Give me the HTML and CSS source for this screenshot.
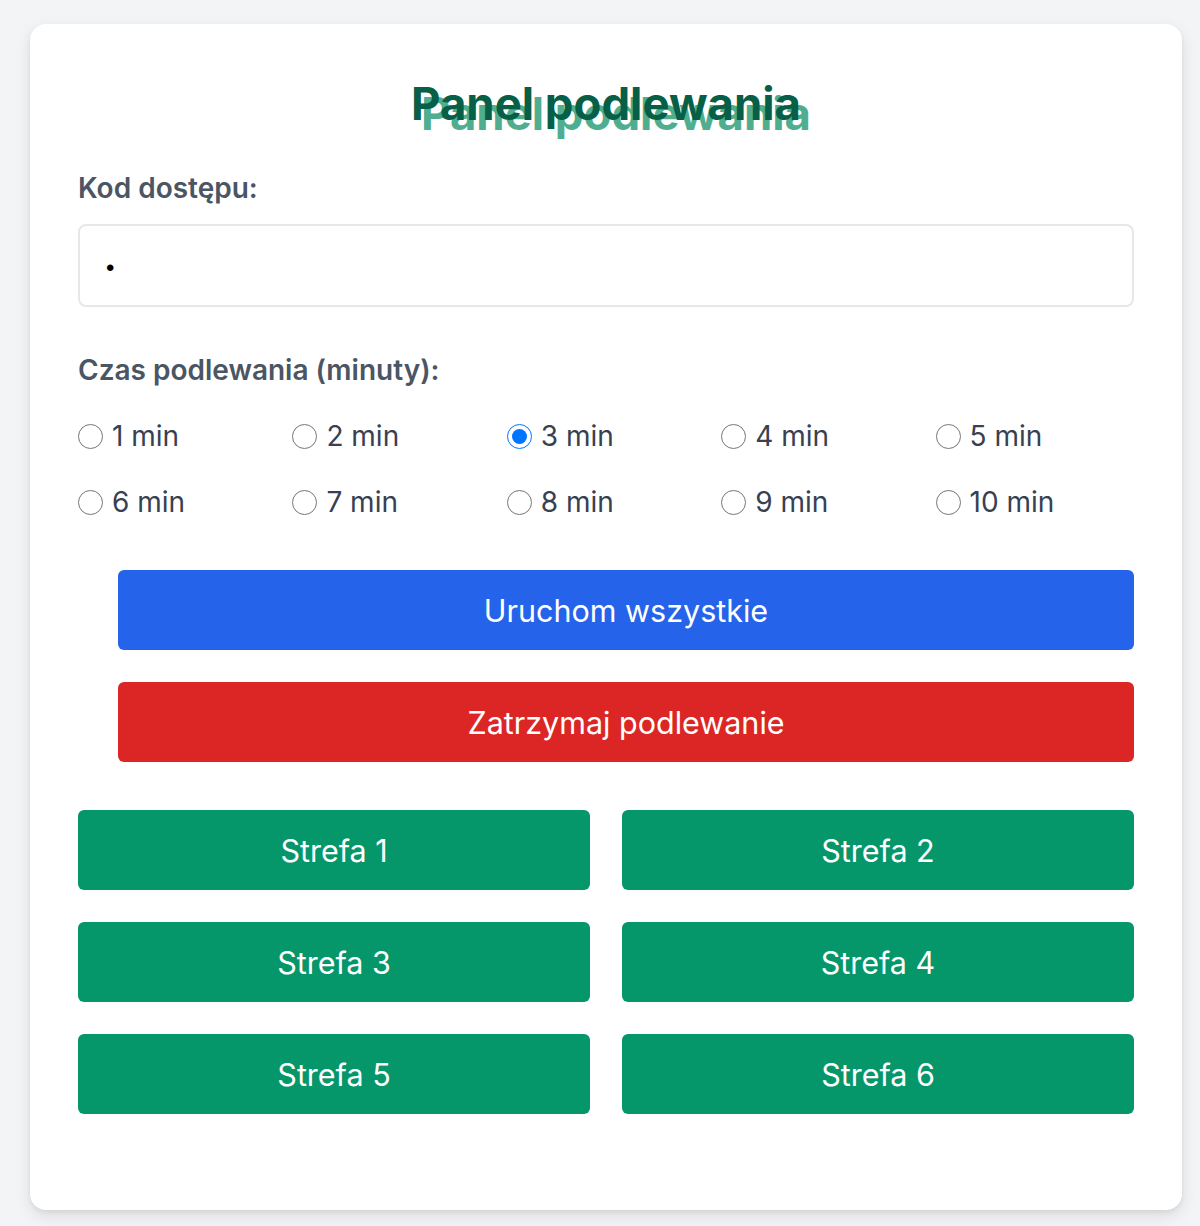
FILE: index.html
```html
<!DOCTYPE html>
<html lang="pl">
<head>
<meta charset="utf-8">
<title>Panel podlewania</title>
<link rel="stylesheet" href="styles.css">
</head>
<body>
<main class="card">
  <h1 class="title">Panel podlewania</h1>
  <label class="label" for="code">Kod dostępu:</label>
  <input class="code" id="code" type="password" value="1">
  <div class="label label-time">Czas podlewania (minuty):</div>
  <div class="radios">
    <label class="opt"><input type="radio" name="t"> 1 min</label>
    <label class="opt"><input type="radio" name="t"> 2 min</label>
    <label class="opt"><input type="radio" name="t" checked> 3 min</label>
    <label class="opt"><input type="radio" name="t"> 4 min</label>
    <label class="opt"><input type="radio" name="t"> 5 min</label>
    <label class="opt"><input type="radio" name="t"> 6 min</label>
    <label class="opt"><input type="radio" name="t"> 7 min</label>
    <label class="opt"><input type="radio" name="t"> 8 min</label>
    <label class="opt"><input type="radio" name="t"> 9 min</label>
    <label class="opt"><input type="radio" name="t"> 10 min</label>
  </div>
  <div class="actions">
    <button class="btn btn-blue">Uruchom wszystkie</button>
    <button class="btn btn-red">Zatrzymaj podlewanie</button>
  </div>
  <div class="zones">
    <button class="btn btn-green">Strefa 1</button>
    <button class="btn btn-green">Strefa 2</button>
    <button class="btn btn-green">Strefa 3</button>
    <button class="btn btn-green">Strefa 4</button>
    <button class="btn btn-green">Strefa 5</button>
    <button class="btn btn-green">Strefa 6</button>
  </div>
</main>
</body>
</html>
```
FILE: styles.css
```css
* { box-sizing: border-box; }
html, body { margin: 0; }
body {
  background: #f3f4f6;
  padding: 24px 18px 16px 30px;
  font-family: Inter, "Noto Sans", sans-serif;
}
.card {
  background: #fff;
  border-radius: 16px;
  box-shadow: 0 6px 16px rgba(0,0,0,0.10), 0 2px 4px rgba(0,0,0,0.06);
  padding: 48px 48px 96px;
}
.title {
  margin: 4px 0 40px;
  text-align: center;
  font-size: 45.5px;
  line-height: 56px;
  font-weight: 700;
  letter-spacing: 0;
  color: #065f46;
  text-shadow: 10px 10px 0 #4fae8f;
}
.label {
  display: block;
  font-size: 28px;
  line-height: 32px;
  font-weight: 600;
  color: #4b5563;
  margin-bottom: 20px;
}
.label-time {
  margin-bottom: 34px;
}
.code {
  display: block;
  width: 100%;
  height: 83px;
  border: 2px solid #e5e7eb;
  border-radius: 8px;
  padding: 5px 26px 0;
  font-size: 24px;
  margin-bottom: 47px;
  outline: none;
}
.radios {
  display: grid;
  grid-template-columns: repeat(5, 1fr);
  column-gap: 16px;
  row-gap: 34px;
  margin-bottom: 52px;
}
.opt {
  display: flex;
  align-items: center;
  gap: 9px;
  font-size: 28px;
  line-height: 32px;
  color: #374151;
}
.opt input {
  width: 25px;
  height: 25px;
  margin: 0;
  accent-color: #0075ff;
}
.actions {
  display: flex;
  flex-direction: column;
  gap: 32px;
  margin-left: 40px;
  margin-bottom: 48px;
}
.btn {
  height: 80px;
  border: none;
  border-radius: 6px;
  color: #fff;
  font-family: inherit;
  font-size: 30.5px;
  cursor: pointer;
}
.btn-blue { background: #2563eb; }
.btn-red { background: #dc2626; }
.btn-green { background: #059669; }
.zones {
  display: grid;
  grid-template-columns: 1fr 1fr;
  gap: 32px;
}
```
